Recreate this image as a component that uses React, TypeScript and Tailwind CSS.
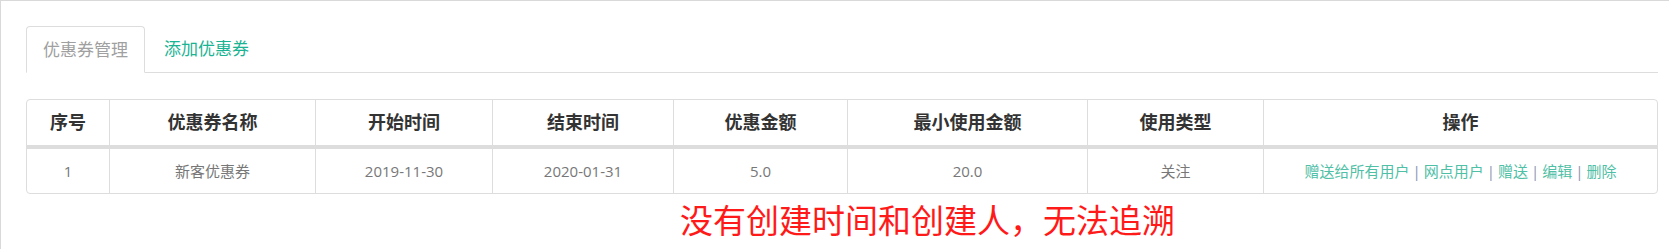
const font = "font-['Open_Sans','Noto_Sans_CJK_SC',sans-serif]";

const columns = [
  { title: "序号", width: "w-[82px]" },
  { title: "优惠券名称", width: "w-[206px]" },
  { title: "开始时间", width: "w-[177px]" },
  { title: "结束时间", width: "w-[181px]" },
  { title: "优惠金额", width: "w-[174px]" },
  { title: "最小使用金额", width: "w-[240px]" },
  { title: "使用类型", width: "w-[176px]" },
  { title: "操作", width: "w-[394px]" },
];

const coupons = [
  {
    id: 1,
    name: "新客优惠券",
    start: "2019-11-30",
    end: "2020-01-31",
    amount: "5.0",
    minAmount: "20.0",
    type: "关注",
  },
];

const actions = ["赠送给所有用户", "网点用户", "赠送", "编辑", "删除"];

function Tabs() {
  return (
    <div className="flex border-b border-[#dddddd]">
      <div className="-mb-px flex h-[47px] items-center rounded-t-[4px] border border-[#dddddd] border-b-white bg-white px-[16px] text-[17px] text-[#a0a0a0]">
        优惠券管理
      </div>
      <a href="#" className="ml-[3px] flex h-[46px] items-center px-[16px] text-[17px] text-[#1ab394]">
        添加优惠券
      </a>
    </div>
  );
}

function CouponTable() {
  return (
    <div className="mt-[26px] overflow-hidden rounded-[4px] border border-[#dddddd]">
      <div className="flex border-b-[4px] border-[#dddddd]">
        {columns.map((col, i) => (
          <div
            key={col.title}
            className={`${col.width} flex h-[45px] items-center justify-center text-[18px] font-bold text-[#333333] ${i > 0 ? "border-l border-[#dddddd]" : ""}`}
          >
            {col.title}
          </div>
        ))}
      </div>
      {coupons.map((c) => {
        const cells = [c.id, c.name, c.start, c.end, c.amount, c.minAmount, c.type];
        return (
          <div key={c.id} className="flex text-[15px] text-[#777777]">
            {cells.map((v, i) => (
              <div
                key={i}
                className={`${columns[i].width} flex h-[44px] items-center justify-center ${i > 0 ? "border-l border-[#dddddd]" : ""}`}
              >
                {v}
              </div>
            ))}
            <div className={`${columns[7].width} flex h-[44px] items-center justify-center border-l border-[#dddddd]`}>
              {actions.map((a, i) => (
                <span key={a} className="flex items-center">
                  {i > 0 && <span className="px-[3px] text-[#8a93b0]">|</span>}
                  <a href="#" className="text-[#4fc0a6]">
                    {a}
                  </a>
                </span>
              ))}
            </div>
          </div>
        );
      })}
    </div>
  );
}

export default function App() {
  return (
    <div className={`${font} h-[249px] w-[1669px] overflow-hidden border-l border-t border-[#d9d9d9] bg-white pl-[25px] pr-[11px] pt-[25px]`}>
      <Tabs />
      <CouponTable />
      <div className="mt-[10px] pl-[654px] text-[33px] leading-none text-[#ff1a1a]">
        没有创建时间和创建人，无法追溯
      </div>
    </div>
  );
}
